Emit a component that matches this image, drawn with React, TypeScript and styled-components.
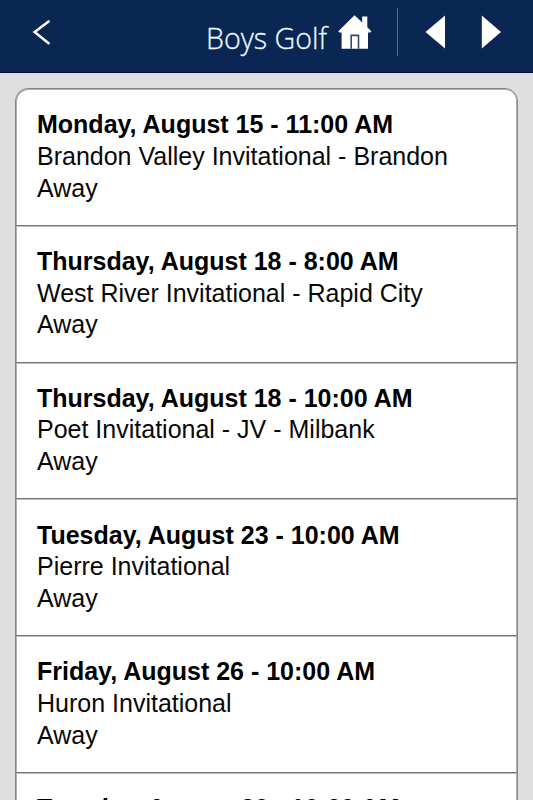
import React from "react";
import styled, { createGlobalStyle } from "styled-components";

const GlobalStyle = createGlobalStyle`
  html, body { margin: 0; height: 100%; overflow: hidden; background: #dfdfdf; }
  * { box-sizing: border-box; }
`;

const Screen = styled.div`
  width: 533px;
  height: 800px;
  overflow: hidden;
  display: flex;
  flex-direction: column;
  background: #dfdfdf;
  font-family: "Liberation Sans", Arial, sans-serif;
`;

const Header = styled.header`
  flex: none;
  height: 73px;
  display: flex;
  align-items: flex-start;
  background: #0a2754;
  border-bottom: 1px solid #020c30;
  box-shadow: 0 1px 0 #d3dae8;
  color: #fff;
`;

const IconButton = styled.button<{ $left: number; $top: number }>`
  flex: none;
  display: block;
  margin: ${(p) => p.$top}px 0 0 ${(p) => p.$left}px;
  padding: 0;
  border: 0;
  background: none;
  color: inherit;
  line-height: 0;
`;

const Title = styled.h1`
  flex: none;
  width: 122px;
  margin: 18px 0 0 154px;
  color: #edf8ff;
  font: 300 29.8px/40px "Open Sans", "Noto Sans", sans-serif;
  white-space: nowrap;
  transform: scaleX(0.96);
  transform-origin: left;
  -webkit-text-stroke: 0.3px #edf8ff;
`;

const Divider = styled.span`
  flex: none;
  width: 1px;
  height: 48px;
  margin: 8px 0 0 25px;
  background: #526b94;
`;

const Schedule = styled.ul`
  flex: none;
  width: 503px;
  margin: 15px 0 0 15px;
  padding: 0;
  list-style: none;
  background: #fff;
  border: 1px solid #858585;
  border-radius: 13px 13px 0 0;
  box-shadow: inset 1px 1px 0 #b0b0b0, inset -1px 0 0 #b0b0b0;
`;

const Event = styled.li`
  height: 136.8px;
  padding: 20.2px 20px 0 21px;
  border-bottom: 1px solid #777;
  box-shadow: 0 1px 0 #bdbdbd;
  color: #080808;
  font-size: 25px;
  line-height: 31.7px;
  white-space: nowrap;
`;

const EventDate = styled.div`
  color: #000;
  font-weight: 700;
`;

const EventLine = styled.div``;

const events = [
  { date: "Monday, August 15 - 11:00 AM", name: "Brandon Valley Invitational - Brandon" },
  { date: "Thursday, August 18 - 8:00 AM", name: "West River Invitational - Rapid City" },
  { date: "Thursday, August 18 - 10:00 AM", name: "Poet Invitational - JV - Milbank" },
  { date: "Tuesday, August 23 - 10:00 AM", name: "Pierre Invitational" },
  { date: "Friday, August 26 - 10:00 AM", name: "Huron Invitational" },
  { date: "Tuesday, August 30 - 10:00 AM", name: "" },
];

export default function App() {
  return (
    <Screen>
      <GlobalStyle />
      <Header>
        <IconButton $left={31} $top={18} aria-label="Back">
          <svg width="21" height="28" viewBox="0 0 21 28" fill="none">
            <path d="M17.6 3.4 3.6 14l14 11.3" stroke="#fff" strokeWidth="2.5" strokeLinecap="round" />
          </svg>
        </IconButton>
        <Title>Boys Golf</Title>
        <IconButton $left={10} $top={14} aria-label="Home">
          <svg width="34" height="36" viewBox="0 0 34 36">
            <path
              d="M16.5 1.2 0.3 17.2 1.3 18.5H3.6V34.8H30V18.5h2.3l1-1.3-4-4V2.4h-5.1v6.2Z"
              fill="#fff"
            />
            <path d="M13.2 34.8V21.4h7.3v13.4" fill="none" stroke="#34496b" strokeWidth="1.6" />
          </svg>
        </IconButton>
        <Divider />
        <IconButton $left={27} $top={15} aria-label="Previous">
          <svg width="21" height="35" viewBox="0 0 21 35">
            <path d="M20 0.5V33.5L0.5 17Z" fill="#fff" />
          </svg>
        </IconButton>
        <IconButton $left={35} $top={15} aria-label="Next">
          <svg width="21" height="35" viewBox="0 0 21 35">
            <path d="M0.8 0.5V33.5L20 17Z" fill="#fff" />
          </svg>
        </IconButton>
      </Header>
      <Schedule>
        {events.map((event) => (
          <Event key={event.date}>
            <EventDate>{event.date}</EventDate>
            <EventLine>{event.name}</EventLine>
            {event.name && <EventLine>Away</EventLine>}
          </Event>
        ))}
      </Schedule>
    </Screen>
  );
}
